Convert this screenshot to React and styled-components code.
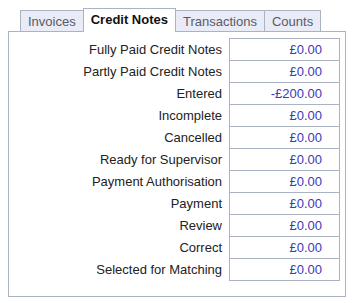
import React from "react";
import styled, { createGlobalStyle } from "styled-components";

const Global = createGlobalStyle`
  html, body { margin: 0; padding: 0; background: #fff; }
  body { font-family: "Liberation Sans", Arial, sans-serif; font-size: 13px; }
`;

const Wrap = styled.div`
  padding: 8px 0 0 8px;
  width: 338px;
`;

const TabBar = styled.div`
  display: flex;
  align-items: flex-end;
  padding-left: 12px;
  margin-bottom: -1px;
  position: relative;
  z-index: 1;
`;

const Tab = styled.div`
  box-sizing: border-box;
  padding: 0 7px;
  border: 1px solid #a9b3c1;
  border-bottom: none;
  margin-left: -1px;
  &:first-child { margin-left: 0; }
  display: flex;
  align-items: center;
  height: ${(p) => (p.$active ? "24px" : "21px")};
  margin-bottom: ${(p) => (p.$active ? "0" : "1px")};
  padding-top: ${(p) => (p.$active ? "0" : "1px")};
  padding-bottom: ${(p) => (p.$active ? "3px" : "0")};
  background: ${(p) => (p.$active ? "#fff" : "#e9ebf6")};
  color: ${(p) => (p.$active ? "#111" : "#5a5a66")};
  font-weight: ${(p) => (p.$active ? "bold" : "normal")};
  position: relative;
  z-index: ${(p) => (p.$active ? 2 : 0)};
`;

const Panel = styled.div`
  box-sizing: border-box;
  border: 1px solid #a9b3c1;
  height: 266px;
  padding: 6px 5px 0 0;
`;

const Row = styled.div`
  display: flex;
  align-items: center;
  & + & { margin-top: -1px; }
`;

const Label = styled.div`
  flex: 1;
  text-align: right;
  padding-right: 7px;
  color: #222;
  white-space: nowrap;
`;

const Value = styled.div`
  box-sizing: border-box;
  width: 111px;
  height: 23px;
  border: 1px solid #a9b3c1;
  display: flex;
  align-items: center;
  justify-content: flex-end;
  padding-right: 17px;
  color: #3a3ab8;
`;

const tabs = ["Invoices", "Credit Notes", "Transactions", "Counts"];
const rows = [
  ["Fully Paid Credit Notes", "£0.00"],
  ["Partly Paid Credit Notes", "£0.00"],
  ["Entered", "-£200.00"],
  ["Incomplete", "£0.00"],
  ["Cancelled", "£0.00"],
  ["Ready for Supervisor", "£0.00"],
  ["Payment Authorisation", "£0.00"],
  ["Payment", "£0.00"],
  ["Review", "£0.00"],
  ["Correct", "£0.00"],
  ["Selected for Matching", "£0.00"],
];

export default function App() {
  return (
    <>
      <Global />
      <Wrap>
        <TabBar>
          {tabs.map((t) => (
            <Tab key={t} $active={t === "Credit Notes"}>
              {t}
            </Tab>
          ))}
        </TabBar>
        <Panel>
          {rows.map(([l, v]) => (
            <Row key={l}>
              <Label>{l}</Label>
              <Value>{v}</Value>
            </Row>
          ))}
        </Panel>
      </Wrap>
    </>
  );
}
